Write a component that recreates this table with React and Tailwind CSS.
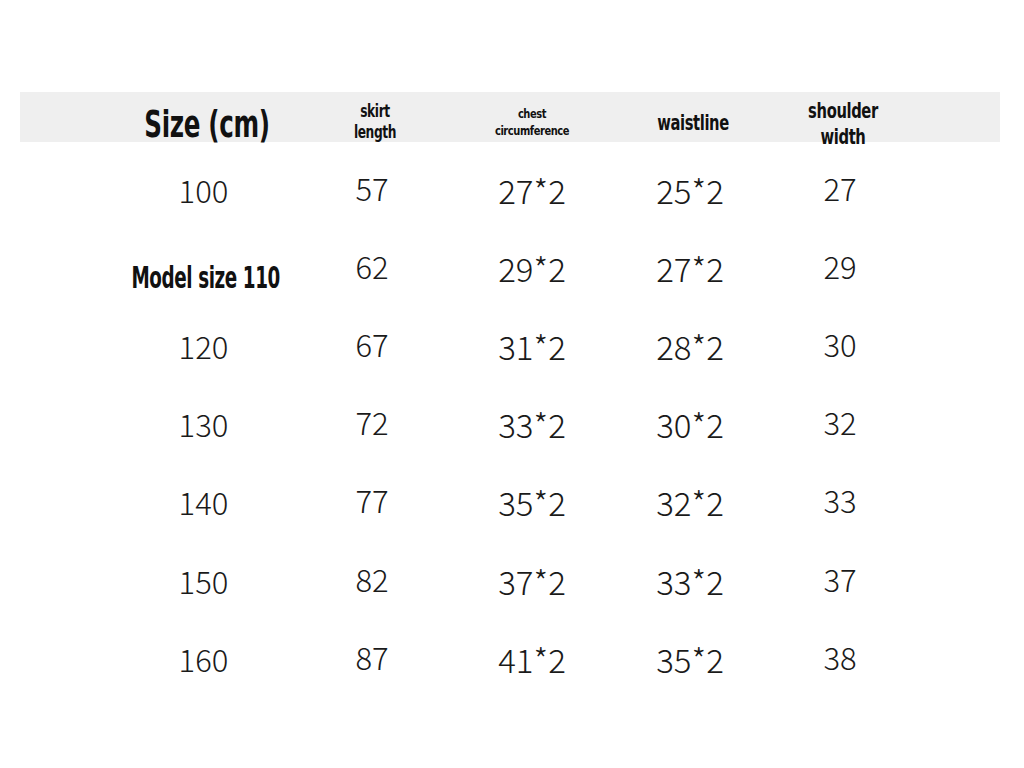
import React from "react";

const rows = [
  ["100", "57", "27*2", "25*2", "27"],
  ["Model size 110", "62", "29*2", "27*2", "29"],
  ["120", "67", "31*2", "28*2", "30"],
  ["130", "72", "33*2", "30*2", "32"],
  ["140", "77", "35*2", "32*2", "33"],
  ["150", "82", "37*2", "33*2", "37"],
  ["160", "87", "41*2", "35*2", "38"],
];

const cond = { fontFamily: '"DejaVu Sans Condensed", "Liberation Sans Narrow", "Roboto", sans-serif' };
const light = { fontFamily: '"Noto Sans CJK SC", "Noto Sans", sans-serif' };

export default function App() {
  return (
    <div className="w-[1024px] h-[768px] bg-white overflow-hidden">
      <div className="pt-[92px]">
        <div
          className="ml-[20px] w-[980px] h-[50px] bg-[#efefef] pl-[92px] grid grid-cols-[190px_140px_180px_136px_168px] items-center text-[#111] font-semibold tracking-[-0.03em]"
          style={cond}
        >
          <div className="text-center text-[38px] leading-none mt-[6px] scale-x-[0.72] whitespace-nowrap">Size (cm)</div>
          <div className="text-center text-[17px] leading-[21px] mt-[2px] ml-[6px] scale-x-[0.8]">skirt<br />length</div>
          <div className="text-center text-[12.5px] leading-[17px] mt-[2px] scale-x-[0.88]">chest<br />circumference</div>
          <div className="text-center text-[21px] leading-none mt-[4px] ml-[6px] scale-x-[0.78]">waistline</div>
          <div className="text-center text-[21px] leading-[26px] mt-[6px] ml-[2px] scale-x-[0.78]">shoulder<br />width</div>
        </div>
        <div className="mt-[8px] ml-[20px] pl-[92px] text-[#1a1a1a]">
          {rows.map((r, i) => (
            <div key={i} className="grid grid-cols-[190px_140px_180px_136px_168px] h-[78.2px] items-center">
              {i === 1 ? (
                <div
                  className="text-center text-[30px] font-semibold leading-none mt-[22px] -ml-[13px] scale-x-[0.68] tracking-[-0.02em] text-[#111] whitespace-nowrap"
                  style={cond}
                >
                  {r[0]}
                </div>
              ) : (
                <div className="text-center text-[31px] font-light leading-none -ml-[7px]" style={light}>{r[0]}</div>
              )}
              <div className="text-center text-[31px] font-light leading-none -mt-[4px]" style={light}>{r[1]}</div>
              <div className="text-center text-[33px] font-light leading-none mt-[2px]" style={light}>{r[2]}</div>
              <div className="text-center text-[33px] font-light leading-none mt-[2px]" style={light}>{r[3]}</div>
              <div className="text-center text-[31px] font-light leading-none -mt-[4px] -ml-[4px]" style={light}>{r[4]}</div>
            </div>
          ))}
        </div>
      </div>
    </div>
  );
}
